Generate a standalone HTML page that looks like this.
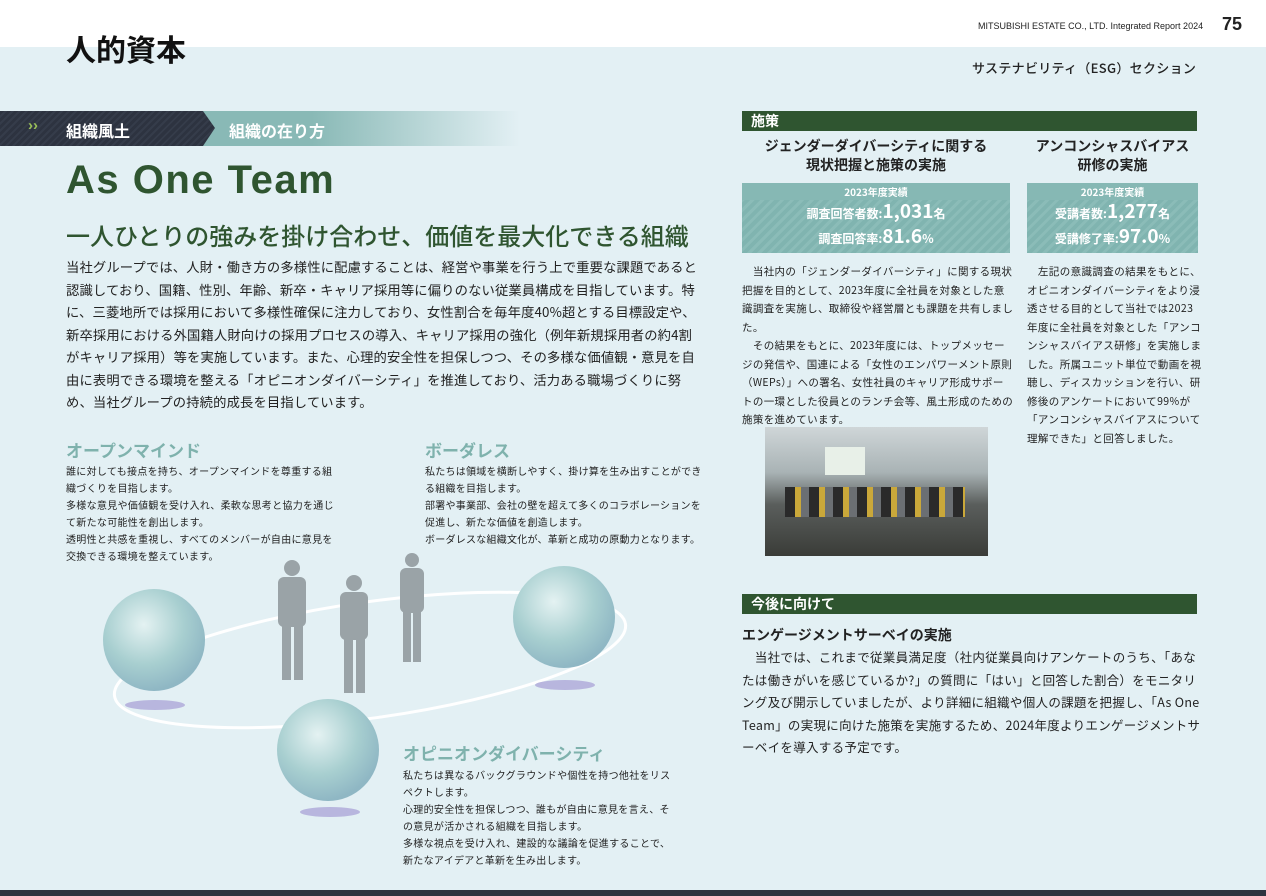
<!DOCTYPE html>
<html><head><meta charset="utf-8"><style>
*{margin:0;padding:0;box-sizing:border-box}
body{width:1266px;height:896px;background:#e3f0f4;font-family:"Liberation Sans","Noto Sans CJK JP",sans-serif;color:#222;position:relative;overflow:hidden}
.a{position:absolute}
.jp{font-family:"Noto Sans CJK JP",sans-serif}
p{line-height:1.9}
</style></head><body>
<div class="a" style="left:0;top:0;width:1266px;height:47px;background:#fff"></div>
<div class="a jp" style="left:66px;top:26px;font-size:30px;font-weight:700;color:#111">人的資本</div>
<div class="a" style="left:978px;top:21px;font-size:9px;color:#222">MITSUBISHI ESTATE CO., LTD. Integrated Report 2024</div>
<div class="a" style="left:1222px;top:14px;font-size:18px;font-weight:700">75</div>
<div class="a jp" style="left:972px;top:58px;font-size:13px;font-weight:500;letter-spacing:.3px">サステナビリティ（ESG）セクション</div>

<div class="a" style="left:0;top:111px;width:520px;height:35px;background:linear-gradient(90deg,#89b9b6 60%,#e3f0f4 100%)"></div>
<div class="a" style="left:0;top:111px;width:215px;height:35px;background:repeating-linear-gradient(135deg,#2d3340 0 3px,#353c4a 3px 5px);clip-path:polygon(0 0,203px 0,215px 17px,203px 35px,0 35px)"></div>
<div class="a" style="left:28px;top:117px;color:#9bc15a;font-size:15px;font-weight:700">››</div>
<div class="a jp" style="left:66px;top:118px;color:#fff;font-size:16px;font-weight:700">組織風土</div>
<div class="a jp" style="left:229px;top:118px;color:#fff;font-size:16px;font-weight:700">組織の在り方</div>
<div class="a" style="left:66px;top:158px;font-size:40px;font-weight:700;color:#2f5530;letter-spacing:1.5px">As One Team</div>
<div class="a jp" style="left:66px;top:217px;font-size:24px;font-weight:500;color:#2f5530">一人ひとりの強みを掛け合わせ、価値を最大化できる組織</div>
<p class="a jp" style="left:66px;top:256px;width:636px;font-size:13.3px;line-height:22.5px;letter-spacing:.15px">当社グループでは、人財・働き方の多様性に配慮することは、経営や事業を行う上で重要な課題であると認識しており、国籍、性別、年齢、新卒・キャリア採用等に偏りのない従業員構成を目指しています。特に、三菱地所では採用において多様性確保に注力しており、女性割合を毎年度40%超とする目標設定や、新卒採用における外国籍人財向けの採用プロセスの導入、キャリア採用の強化（例年新規採用者の約4割がキャリア採用）等を実施しています。また、心理的安全性を担保しつつ、その多様な価値観・意見を自由に表明できる環境を整える「オピニオンダイバーシティ」を推進しており、活力ある職場づくりに努め、当社グループの持続的成長を目指しています。</p>

<div class="a jp" style="left:66px;top:437px;font-size:17px;font-weight:700;color:#7fb2ad">オープンマインド</div>
<p class="a jp" style="left:66px;top:462px;width:270px;font-size:10px;line-height:17px;letter-spacing:.3px">誰に対しても接点を持ち、オープンマインドを尊重する組織づくりを目指します。<br>多様な意見や価値観を受け入れ、柔軟な思考と協力を通じて新たな可能性を創出します。<br>透明性と共感を重視し、すべてのメンバーが自由に意見を交換できる環境を整えています。</p>
<div class="a jp" style="left:425px;top:437px;font-size:17px;font-weight:700;color:#7fb2ad">ボーダレス</div>
<p class="a jp" style="left:425px;top:462px;width:278px;font-size:10px;line-height:17px;letter-spacing:.25px">私たちは領域を横断しやすく、掛け算を生み出すことができる組織を目指します。<br>部署や事業部、会社の壁を超えて多くのコラボレーションを促進し、新たな価値を創造します。<br>ボーダレスな組織文化が、革新と成功の原動力となります。</p>
<div class="a jp" style="left:403px;top:740px;font-size:17px;font-weight:700;color:#7fb2ad">オピニオンダイバーシティ</div>
<p class="a jp" style="left:403px;top:766px;width:272px;font-size:10px;line-height:17px;letter-spacing:.3px">私たちは異なるバックグラウンドや個性を持つ他社をリスペクトします。<br>心理的安全性を担保しつつ、誰もが自由に意見を言え、その意見が活かされる組織を目指します。<br>多様な視点を受け入れ、建設的な議論を促進することで、新たなアイデアと革新を生み出します。</p>

<svg class="a" style="left:90px;top:550px" width="560" height="280">
<defs><radialGradient id="g" cx="40%" cy="35%" r="65%"><stop offset="0" stop-color="#e4f2f2"/><stop offset=".6" stop-color="#a8cfd0"/><stop offset="1" stop-color="#8fb7c4"/></radialGradient></defs>
<ellipse cx="280" cy="110" rx="258" ry="58" transform="rotate(-8 280 110)" fill="none" stroke="#fff" stroke-width="3"/>
<ellipse cx="65" cy="155" rx="30" ry="5" fill="#b8b6de"/>
<ellipse cx="475" cy="135" rx="30" ry="5" fill="#b8b6de"/>
<ellipse cx="240" cy="262" rx="30" ry="5" fill="#b8b6de"/>
<circle cx="64" cy="90" r="51" fill="url(#g)"/>
<circle cx="474" cy="67" r="51" fill="url(#g)"/>
<circle cx="238" cy="200" r="51" fill="url(#g)"/>
<g fill="#9aa3a7">
<circle cx="202" cy="18" r="8"/><rect x="188" y="27" width="28" height="50" rx="6"/><rect x="192" y="75" width="9" height="55"/><rect x="204" y="75" width="9" height="55"/>
<circle cx="264" cy="33" r="8"/><rect x="250" y="42" width="28" height="48" rx="6"/><rect x="254" y="88" width="9" height="55"/><rect x="266" y="88" width="9" height="55"/>
<circle cx="322" cy="10" r="7"/><rect x="310" y="18" width="24" height="45" rx="6"/><rect x="313" y="62" width="8" height="50"/><rect x="323" y="62" width="8" height="50"/>
</g></svg>

<div class="a jp" style="left:742px;top:111px;width:455px;height:20px;background:#2f5530;color:#fff;font-size:14px;font-weight:700;padding-left:9px;line-height:20px">施策</div>
<div class="a jp" style="left:742px;top:137px;width:268px;text-align:center;font-size:14px;font-weight:700;line-height:19px">ジェンダーダイバーシティに関する<br>現状把握と施策の実施</div>
<div class="a jp" style="left:1027px;top:137px;width:171px;text-align:center;font-size:14px;font-weight:700;line-height:19px">アンコンシャスバイアス<br>研修の実施</div>
<div class="a jp" style="left:742px;top:183px;width:268px;height:70px;background:repeating-linear-gradient(135deg,#80b4b0 0 4px,#8bbcb8 4px 7px);color:#fff;text-align:center;font-weight:700">
<div style="background:#86b8b4;font-size:10px;height:17px;line-height:17px">2023年度実績</div>
<div style="font-size:12px;line-height:22px">調査回答者数:<span style="font-size:19px">1,031</span>名<br>調査回答率:<span style="font-size:19px">81.6</span>%</div></div>
<div class="a jp" style="left:1027px;top:183px;width:171px;height:70px;background:repeating-linear-gradient(135deg,#80b4b0 0 4px,#8bbcb8 4px 7px);color:#fff;text-align:center;font-weight:700">
<div style="background:#86b8b4;font-size:10px;height:17px;line-height:17px">2023年度実績</div>
<div style="font-size:12px;line-height:22px">受講者数:<span style="font-size:19px">1,277</span>名<br>受講修了率:<span style="font-size:19px">97.0</span>%</div></div>
<p class="a jp" style="left:742px;top:263px;width:272px;font-size:10.5px;line-height:18.5px;letter-spacing:.35px">　当社内の「ジェンダーダイバーシティ」に関する現状把握を目的として、2023年度に全社員を対象とした意識調査を実施し、取締役や経営層とも課題を共有しました。<br>　その結果をもとに、2023年度には、トップメッセージの発信や、国連による「女性のエンパワーメント原則（WEPs）」への署名、女性社員のキャリア形成サポートの一環とした役員とのランチ会等、風土形成のための施策を進めています。</p>
<p class="a jp" style="left:1027px;top:263px;width:175px;font-size:10.5px;line-height:18.5px;letter-spacing:.4px">　左記の意識調査の結果をもとに、オピニオンダイバーシティをより浸透させる目的として当社では2023年度に全社員を対象とした「アンコンシャスバイアス研修」を実施しました。所属ユニット単位で動画を視聴し、ディスカッションを行い、研修後のアンケートにおいて99%が「アンコンシャスバイアスについて理解できた」と回答しました。</p>
<div class="a" style="left:765px;top:427px;width:223px;height:129px;background:linear-gradient(180deg,#cfd6d8 0%,#a9b3b5 35%,#5a5e5c 60%,#3a3c38 100%);overflow:hidden">
<div style="position:absolute;left:60px;top:20px;width:40px;height:28px;background:#e8f0e8"></div>
<div style="position:absolute;left:20px;top:60px;width:180px;height:30px;background:repeating-linear-gradient(90deg,#2a2a2a 0 10px,#caa83a 10px 16px,#6b6f73 16px 24px)"></div></div>

<div class="a jp" style="left:742px;top:594px;width:455px;height:20px;background:#2f5530;color:#fff;font-size:14px;font-weight:700;padding-left:9px;line-height:20px">今後に向けて</div>
<div class="a jp" style="left:742px;top:625px;font-size:14px;font-weight:700">エンゲージメントサーベイの実施</div>
<p class="a jp" style="left:742px;top:646px;width:462px;font-size:12.5px;line-height:22.5px;letter-spacing:.3px">　当社では、これまで従業員満足度（社内従業員向けアンケートのうち、「あなたは働きがいを感じているか?」の質問に「はい」と回答した割合）をモニタリング及び開示していましたが、より詳細に組織や個人の課題を把握し、「As One Team」の実現に向けた施策を実施するため、2024年度よりエンゲージメントサーベイを導入する予定です。</p>
<div class="a" style="left:0;top:890px;width:1266px;height:6px;background:#2d3340"></div>
</body></html>
